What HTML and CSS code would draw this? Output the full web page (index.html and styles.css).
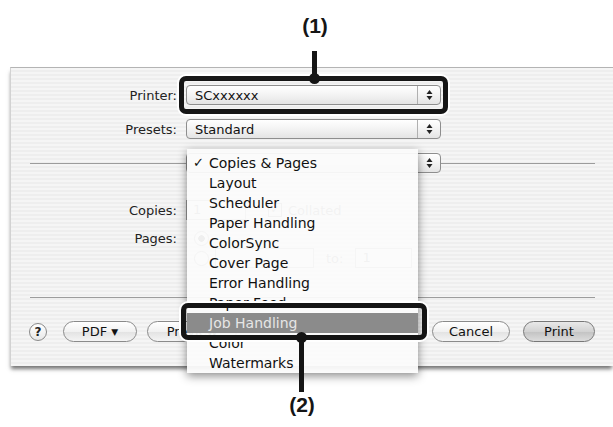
FILE: index.html
```html
<!DOCTYPE html>
<html lang="en">
<head>
    <meta charset="UTF-8">
    <meta name="viewport" content="width=device-width, initial-scale=1.0">
    <title>Print dialog - Job Handling</title>
    <link rel="stylesheet" href="styles.css">
</head>
<body>
    <div class="stage">
        <div class="top-gap"></div>

        <div class="dialog">
            <div class="form-row first">
                <span class="label">Printer:</span>
                <div class="popup">
                    <span class="popup-text">SCxxxxxx</span>
                    <span class="stepper">
                        <svg width="7" height="12" viewBox="0 0 7 12"><path d="M3.5 1 L6.5 5 L0.5 5 Z M0.5 7 L6.5 7 L3.5 11 Z" fill="#222"/></svg>
                    </span>
                </div>
            </div>
            <div class="form-row">
                <span class="label">Presets:</span>
                <div class="popup">
                    <span class="popup-text">Standard</span>
                    <span class="stepper">
                        <svg width="7" height="12" viewBox="0 0 7 12"><path d="M3.5 1 L6.5 5 L0.5 5 Z M0.5 7 L6.5 7 L3.5 11 Z" fill="#222"/></svg>
                    </span>
                </div>
            </div>

            <!-- panel selector, covered by the open menu -->
            <div class="section-row">
                <span class="rule left"></span>
                <div class="popup">
                    <span class="popup-text"></span>
                    <span class="stepper">
                        <svg width="7" height="12" viewBox="0 0 7 12"><path d="M3.5 1 L6.5 5 L0.5 5 Z M0.5 7 L6.5 7 L3.5 11 Z" fill="#222"/></svg>
                    </span>
                </div>
                <span class="rule right"></span>
            </div>

            <div class="form-row copies">
                <span class="label">Copies:</span>
                <div class="controls">
                    <span class="field short">1</span>
                    <span class="checkbox">&#10003;</span>
                    <span class="ctl-text">Collated</span>
                </div>
            </div>
            <div class="form-row pages">
                <span class="label">Pages:</span>
                <div class="controls">
                    <span class="radio on"></span>
                </div>
            </div>
            <div class="form-row range">
                <span class="label"></span>
                <div class="controls">
                    <span class="radio"></span>
                    <span class="field from"></span>
                    <span class="ctl-text to-label">to:</span>
                    <span class="field to">1</span>
                </div>
            </div>

            <div class="rule bottom"></div>

            <div class="button-bar">
                <span class="help">?</span>
                <span class="button pdf">PDF <span class="arrow">&#9660;</span></span>
                <span class="button preview">Preview</span>
                <span class="spacer"></span>
                <span class="button cancel">Cancel</span>
                <span class="button print">Print</span>
            </div>
        </div>

        <ul class="menu">
            <li><span class="check">&#10003;</span>Copies &amp; Pages</li>
            <li>Layout</li>
            <li>Scheduler</li>
            <li>Paper Handling</li>
            <li>ColorSync</li>
            <li>Cover Page</li>
            <li>Error Handling</li>
            <li>Paper Feed</li>
            <li class="selected">Job Handling</li>
            <li>Color</li>
            <li>Watermarks</li>
        </ul>

        <!-- callouts -->
        <div class="callout-label one">(1)</div>
        <div class="callout-line one"></div>
        <div class="callout-box one"></div>
        <div class="callout-dot one"></div>

        <div class="callout-box two"></div>
        <div class="callout-dot two"></div>
        <div class="callout-line two"></div>
        <div class="callout-label two">(2)</div>
    </div>
</body>
</html>
```

FILE: styles.css
```css
body {
    margin: 0;
    padding: 0;
    background-color: #ffffff;
    font-family: "DejaVu Sans", sans-serif;
    color: #222;
}
.stage {
    position: relative;
    width: 613px;
    height: 427px;
    overflow: hidden;
}
.top-gap {
    height: 67px;
}
.dialog {
    box-sizing: border-box;
    width: 603px;
    height: 299px;
    margin-left: 10px;
    padding-top: 17px;
    border-top: 1px solid #b4b4b4;
    border-left: 1px solid #d2d2d2;
    background: repeating-linear-gradient(#f5f5f5 0 2px, #eeeeee 2px 4px);
    box-shadow: 0 4px 4px -1px rgba(0,0,0,0.55);
}
.form-row {
    display: grid;
    grid-template-columns: 166px 255px;
    column-gap: 9px;
    align-items: center;
    height: 20px;
    margin-top: 14px;
    font-size: 13px;
}
.form-row.first {
    margin-top: 0;
}
.label {
    text-align: right;
    color: #222;
}
.popup {
    box-sizing: border-box;
    display: flex;
    align-items: center;
    width: 255px;
    height: 20px;
    border: 1px solid #8e8e8e;
    border-radius: 4px;
    background: linear-gradient(#ffffff, #f3f3f3 50%, #e4e4e4);
    font-size: 13px;
}
.popup-text {
    flex: 1;
    padding-left: 8px;
    color: #111;
}
.stepper {
    display: flex;
    align-items: center;
    justify-content: center;
    width: 22px;
    height: 100%;
    border-left: 1px solid #b0b0b0;
}
.section-row {
    display: flex;
    align-items: center;
    height: 20px;
    margin-top: 14px;
}
.rule {
    height: 1px;
    background-color: #9c9c9c;
}
.rule.left {
    width: 156px;
    margin-left: 19px;
}
.rule.right {
    flex: 1;
    margin-right: 18px;
}
.rule.bottom {
    margin: 29px 18px 0 19px;
}
.form-row.copies {
    margin-top: 27px;
}
.form-row.pages {
    margin-top: 8px;
}
.form-row.range {
    margin-top: 0;
}
.controls {
    display: flex;
    align-items: center;
    gap: 6px;
    color: #666;
}
.field {
    box-sizing: border-box;
    height: 20px;
    border: 1px solid #999;
    background-color: #fff;
    padding-left: 6px;
    line-height: 18px;
}
.field.short {
    width: 60px;
    margin-right: 16px;
}
.field.from {
    width: 99px;
}
.to-label {
    margin-left: 6px;
}
.field.to {
    width: 57px;
    margin-left: 6px;
}
.checkbox {
    width: 12px;
    height: 12px;
    border: 1px solid #777;
    font-size: 11px;
    line-height: 12px;
    text-align: center;
}
.radio {
    width: 13px;
    height: 13px;
    border: 1px solid #777;
    border-radius: 50%;
    margin-left: 8px;
    background-color: #fff;
}
.radio.on {
    background: radial-gradient(circle, #333 0 3px, #fff 3.5px);
}
.button-bar {
    display: flex;
    align-items: center;
    height: 21px;
    margin-top: 23px;
    padding: 0 18px;
    font-size: 13px;
}
.help {
    box-sizing: border-box;
    width: 18px;
    height: 18px;
    border: 1px solid #8a8a8a;
    border-radius: 50%;
    background: linear-gradient(#ffffff, #e8e8e8);
    font-size: 12px;
    font-weight: bold;
    line-height: 16px;
    text-align: center;
    margin-right: 16px;
}
.button {
    box-sizing: border-box;
    height: 21px;
    border: 1px solid #8a8a8a;
    border-radius: 11px;
    background: linear-gradient(#ffffff, #f1f1f1 50%, #e2e2e2 51%, #f4f4f4);
    line-height: 19px;
    text-align: center;
    color: #111;
}
.button .arrow {
    font-size: 9px;
    vertical-align: 1px;
}
.button.pdf {
    width: 74px;
}
.button.preview {
    width: 90px;
    margin-left: 10px;
}
.spacer {
    flex: 1;
}
.button.cancel {
    width: 78px;
}
.button.print {
    width: 72px;
    margin-left: 13px;
    background: linear-gradient(#e9e9e9, #d2d2d2 50%, #c2c2c2 51%, #dcdcdc);
    border-color: #777;
}
.menu {
    position: absolute;
    left: 187px;
    top: 149px;
    box-sizing: border-box;
    width: 231px;
    height: 224px;
    margin: 0;
    padding: 4px 0 0 0;
    list-style: none;
    background-color: rgba(251,251,251,0.94);
    box-shadow: 0 3px 9px rgba(0,0,0,0.45);
    font-size: 14px;
}
.menu li {
    position: relative;
    height: 20px;
    line-height: 20px;
    padding-left: 22px;
    color: #111;
}
.menu .check {
    position: absolute;
    left: 6px;
    font-size: 13px;
}
.menu li.selected {
    background-color: #8b8b8b;
    color: #e6e6e6;
}
.callout-box {
    position: absolute;
    box-sizing: border-box;
    border: 5px solid #151515;
    border-radius: 7px;
    box-shadow: 0 0 0 2px #ffffff;
}
.callout-box.one {
    left: 179px;
    top: 76px;
    width: 269px;
    height: 38px;
}
.callout-box.two {
    left: 181px;
    top: 303px;
    width: 246px;
    height: 37px;
}
.callout-dot {
    position: absolute;
    width: 11px;
    height: 11px;
    border-radius: 50%;
    background-color: #151515;
}
.callout-dot.one {
    left: 309px;
    top: 73px;
}
.callout-dot.two {
    left: 296px;
    top: 332px;
}
.callout-line {
    position: absolute;
    width: 5px;
    background-color: #151515;
}
.callout-line.one {
    left: 312px;
    top: 51px;
    height: 26px;
}
.callout-line.two {
    left: 299px;
    top: 338px;
    height: 54px;
}
.callout-label {
    position: absolute;
    width: 60px;
    font-family: "Liberation Sans", Arial, sans-serif;
    font-weight: bold;
    font-size: 21px;
    text-align: center;
    color: #151515;
}
.callout-label.one {
    left: 285px;
    top: 14px;
}
.callout-label.two {
    left: 272px;
    top: 393px;
}
```
